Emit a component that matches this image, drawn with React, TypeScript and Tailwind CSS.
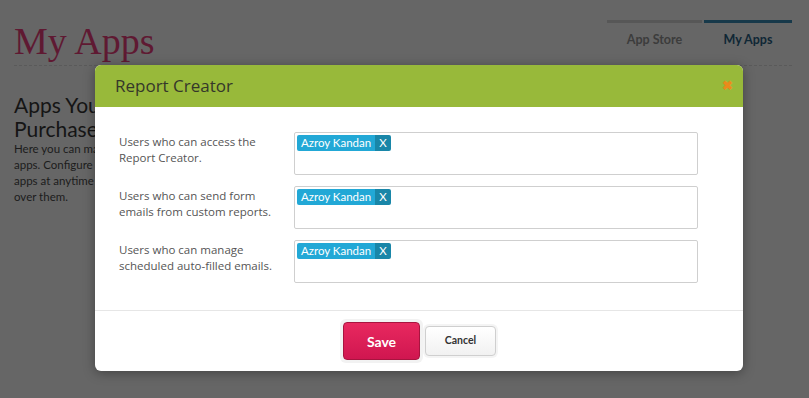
import React from "react";

const sans = { fontFamily: "Lato, 'Open Sans', sans-serif" };
const open = { fontFamily: "'Open Sans', Lato, sans-serif" };

function Tag() {
  return (
    <div className="flex h-4 items-stretch overflow-hidden rounded-[2px] text-[11.5px] leading-4 text-white" style={sans}>
      <span className="bg-[#22a8d6] pl-[4px] pr-[4px]">Azroy Kandan</span>
      <span className="bg-[#1986a8] px-[4px]">X</span>
    </div>
  );
}

const rows = [
  ["Users who can access the", "Report Creator."],
  ["Users who can send form", "emails from custom reports."],
  ["Users who can manage", "scheduled auto-filled emails."],
];

export default function App() {
  return (
    <div className="relative h-[398px] w-[809px] overflow-hidden bg-[#666666]" style={sans}>
      <div className="w-[792px] pl-[14px]">
        <div className="flex items-start justify-between">
          <h1
            className="pt-[21px] text-[38px] leading-[40px] text-[#5f1932]"
            style={{ fontFamily: "'Liberation Serif', serif", fontWeight: 300 }}
          >
            My Apps
          </h1>
          <div className="mt-[20px] flex">
            <div className="w-[95px] border-t-[3px] border-[#575757] pt-[8px] text-center text-[12.5px] font-bold text-[#3c3c3c]">
              App Store
            </div>
            <div className="ml-[2px] w-[88px] border-t-[3px] border-[#17394a] pt-[8px] text-center text-[12.5px] font-bold text-[#0f2735]">
              My Apps
            </div>
          </div>
        </div>
        <div className="mt-[4px] border-b border-dashed border-[#5a5a5a]" />
        <div className="w-[240px] pt-[27px]">
          <h2 className="text-[21px] leading-[24px] text-[#151515]">
            Apps You've
            <br />
            Purchased
          </h2>
          <p className="text-[11.5px] leading-[16px] text-[#1c1c1c]">
            Here you can manage all of your
            <br />
            apps. Configure the settings of your
            <br />
            apps at anytime and take control
            <br />
            over them.
          </p>
        </div>
      </div>

      <div className="absolute left-[95px] top-[65px] w-[648px] overflow-hidden rounded-[6px] bg-white shadow-[0_2px_12px_rgba(0,0,0,0.35)]">
        <div className="flex h-[42px] items-center justify-between bg-[#98b93a] pl-[20px] pr-[10px]">
          <span className="text-[17px] text-[#35372a]" style={open}>Report Creator</span>
          <span className="text-[13px] font-bold text-[#e98b1b]">✖</span>
        </div>
        <div className="flex flex-col gap-[11px] pl-[24px] pr-[45px] pt-[25px] pb-[27px]">
          {rows.map((r, i) => (
            <div key={i} className="flex">
              <div className="w-[175px] pt-[2px] text-[11.5px] leading-[16px] text-[#555555]" style={open}>
                <div>{r[0]}</div>
                <div>{r[1]}</div>
              </div>
              <div className="h-[43px] flex-1 rounded-[2px] border border-[#cfcfcf] pl-[2px] pt-[2px]">
                <div className="flex">
                  <Tag />
                </div>
              </div>
            </div>
          ))}
        </div>
        <div className="flex h-[61px] items-center justify-center border-t border-[#e6e6e6]">
          <div className="rounded-[6px] bg-[#f2f2f2] p-[3px]">
            <button className="h-[38px] w-[77px] rounded-[4px] border border-[#a8143f] bg-gradient-to-b from-[#e8285f] to-[#d01650] text-[14px] font-bold text-white">
              Save
            </button>
          </div>
          <div className="rounded-[6px] bg-[#f4f4f4] p-[2px]">
            <button className="h-[30px] w-[71px] rounded-[4px] border border-[#cfcfcf] bg-gradient-to-b from-white to-[#f1f1f1] text-[10.5px] font-bold text-[#333333]">
              Cancel
            </button>
          </div>
        </div>
      </div>
    </div>
  );
}
